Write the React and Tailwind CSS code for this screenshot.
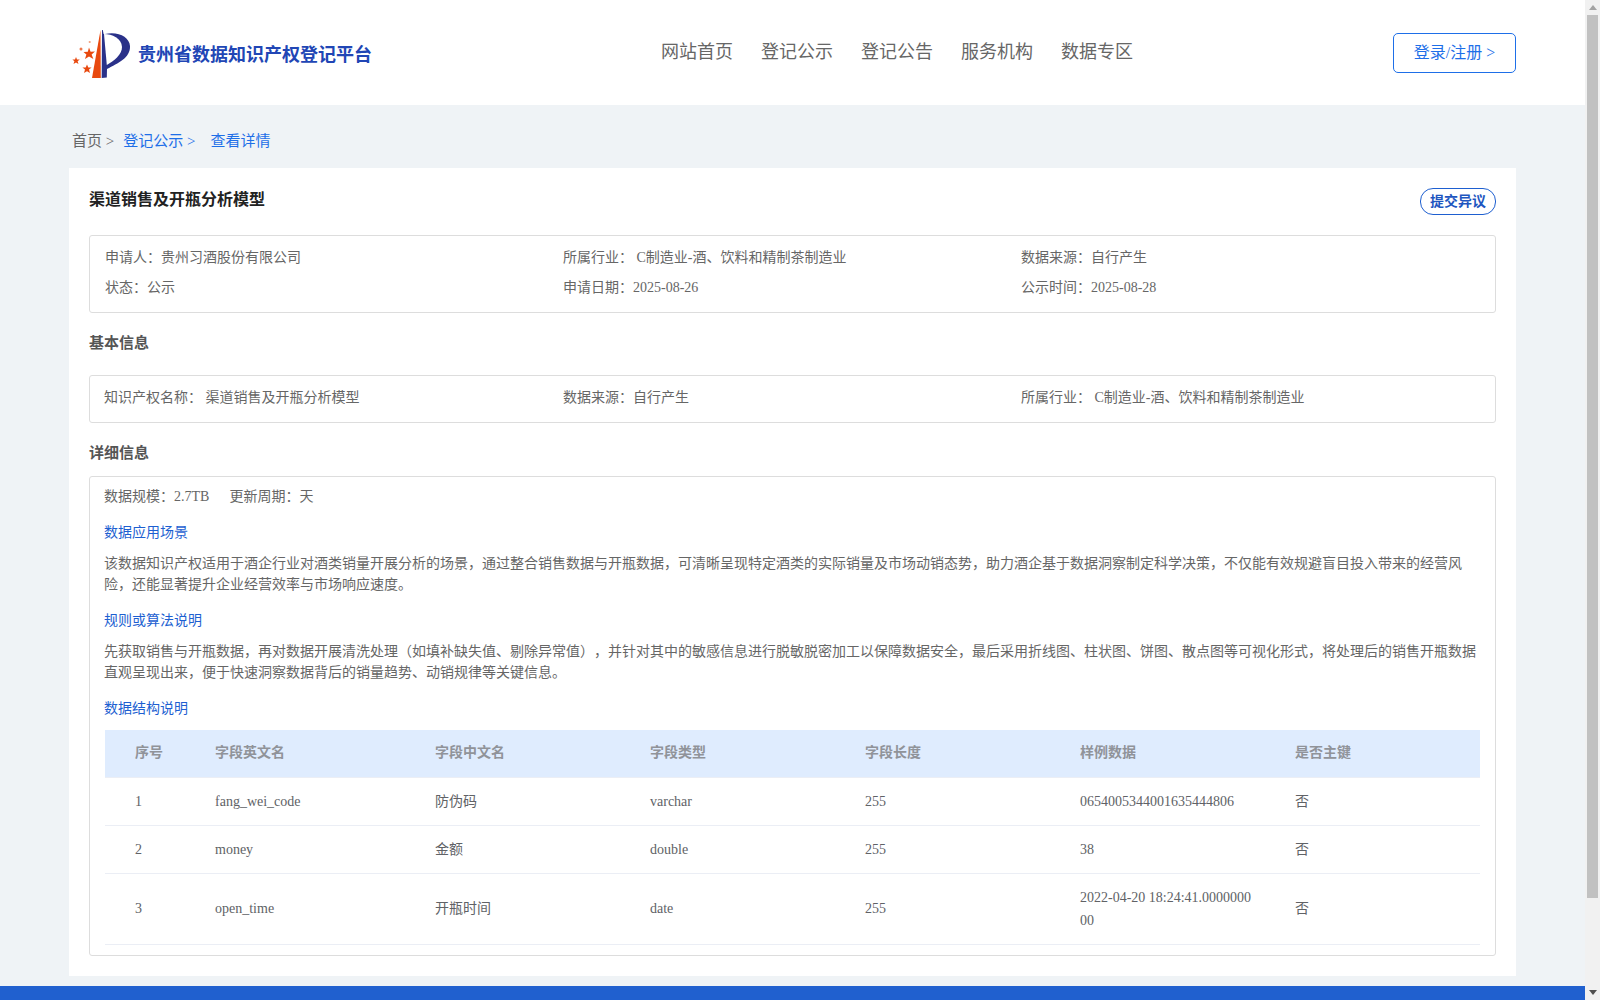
const rows = [
  ["1", "fang_wei_code", "防伪码", "varchar", "255", "0654005344001635444806", "否"],
  ["2", "money", "金额", "double", "255", "38", "否"],
  ["3", "open_time", "开瓶时间", "date", "255", "2022-04-20 18:24:41.000000000", "否"],
];
const heads = ["序号", "字段英文名", "字段中文名", "字段类型", "字段长度", "样例数据", "是否主键"];
const nav = ["网站首页", "登记公示", "登记公告", "服务机构", "数据专区"];

function Logo() {
  return (
    <svg viewBox="72 28 60 50" className="w-[60px] h-[50px] shrink-0">
      <path d="M100.5 29 L92 77 L100.8 77 Z" fill="#e8490f" />
      <path d="M102 29 L101.7 77 L106.8 76.5 L107 68 C118 62 130.5 57 130 45 C129.5 36 118 30 105 33 L103.6 33 L102.8 29 Z" fill="#2a3189" />
      <path d="M104 33 C112 33 121.5 37 122 46 C122.3 53 114 60 106.8 64 Z" fill="#ffffff" />
      <path d="M89 46.5 L90.6 50.8 L95 50.4 L91.6 53.6 L93.4 58 L89 55.6 L85 58 L86.4 53.4 L83.5 51 L87.8 50.8 Z" fill="#e8490f" />
      <path d="M76 56 L77 58.6 L79.8 58.5 L77.6 60.3 L78.5 63 L76 61.5 L73.5 63 L74.4 60.3 L72.4 58.5 L75 58.6 Z" fill="#e8490f" />
      <path d="M87 63.5 L88.3 66.4 L91.6 66.5 L89 68.6 L90 72 L87 70.2 L84 72 L85 68.6 L82.4 66.5 L85.7 66.4 Z" fill="#e8490f" />
      <circle cx="81" cy="48" r="1.5" fill="#ee7a50" />
      <circle cx="89.7" cy="41" r="1.1" fill="#f2a07e" />
    </svg>
  );
}

function Field({ children }) {
  return <div className="w-[458px] shrink-0 whitespace-nowrap">{children}</div>;
}

export default function App() {
  return (
    <div className="flex h-screen w-full overflow-hidden bg-[#eff3f6] text-sm text-[#666666] font-['Liberation_Serif','Noto_Sans_CJK_SC',serif] [text-spacing-trim:space-all]">
      <main className="w-[1585px] shrink-0">
        <header className="flex h-[105px] items-center bg-white pl-[72px]">
          <div className="flex w-[589px] items-center gap-[6px] pt-[2px]">
            <Logo />
            <span className="mt-[2px] text-lg font-bold text-[#2146b5]">贵州省数据知识产权登记平台</span>
          </div>
          <nav className="mb-[2px] flex gap-[28px] text-lg leading-[24px] text-[#666666]">
            {nav.map((n) => (
              <a key={n} className="block w-[72px]">{n}</a>
            ))}
          </nav>
          <button className="ml-[260px] h-[40px] w-[123px] rounded-[5px] border border-[#1e6fe8] text-base text-[#1e6fe8]">
            登录/注册 &gt;
          </button>
        </header>

        <div className="pl-[72px] pt-[25px] pb-[16px] text-[15px] leading-[22px]">
          <span>首页 &gt;</span>
          <span className="ml-[9px] text-[#1e6fe8]">登记公示 &gt;</span>
          <span className="ml-[15px] text-[#1e6fe8]">查看详情</span>
        </div>

        <section className="ml-[69px] w-[1447px] bg-white px-[20px] pt-[20px] pb-[20px]">
          <div className="flex h-[27px] items-start justify-between">
            <h1 className="text-base font-bold leading-[24px] text-[#222222]">渠道销售及开瓶分析模型</h1>
            <button className="h-[27px] w-[76px] rounded-[13px] border border-[#1e5fd0] text-sm font-bold leading-[25px] text-[#1e56c0]">
              提交异议
            </button>
          </div>

          <div className="mt-[20px] rounded-[3px] border border-[#dddddd] pl-[15px] pt-[7px] pb-[9px] leading-[30px]">
            <div className="flex">
              <Field>申请人：贵州习酒股份有限公司</Field>
              <Field>所属行业： C制造业-酒、饮料和精制茶制造业</Field>
              <Field>数据来源：自行产生</Field>
            </div>
            <div className="flex">
              <Field>状态：公示</Field>
              <Field>申请日期：2025-08-26</Field>
              <Field>公示时间：2025-08-28</Field>
            </div>
          </div>

          <h2 className="mt-[19px] text-[15px] font-bold leading-[22px] text-[#555555]">基本信息</h2>

          <div className="mt-[21px] flex rounded-[3px] border border-[#dddddd] pl-[14px] pt-[7px] pb-[9px] leading-[30px]">
            <div className="w-[459px] shrink-0 whitespace-nowrap">知识产权名称： 渠道销售及开瓶分析模型</div>
            <Field>数据来源：自行产生</Field>
            <Field>所属行业： C制造业-酒、饮料和精制茶制造业</Field>
          </div>

          <h2 className="mt-[19px] text-[15px] font-bold leading-[22px] text-[#555555]">详细信息</h2>

          <div className="mt-[12px] rounded-[3px] border border-[#dddddd] pl-[14px] pr-[15px] pt-[5px] pb-[10px]">
            <div className="leading-[30px]">
              数据规模：2.7TB<span className="ml-[20px]">更新周期：天</span>
            </div>

            <h3 className="mt-[11px] font-normal leading-[20px] text-[#1d5fd1]">数据应用场景</h3>
            <p className="mt-[10px] w-[1376px] leading-[21px]">
              该数据知识产权适用于酒企行业对酒类销量开展分析的场景，通过整合销售数据与开瓶数据，可清晰呈现特定酒类的实际销量及市场动销态势，助力酒企基于数据洞察制定科学决策，不仅能有效规避盲目投入带来的经营风险，还能显著提升企业经营效率与市场响应速度。
            </p>

            <h3 className="mt-[16px] font-normal leading-[20px] text-[#1d5fd1]">规则或算法说明</h3>
            <p className="mt-[10px] w-[1376px] leading-[21px]">
              先获取销售与开瓶数据，再对数据开展清洗处理（如填补缺失值、剔除异常值），并针对其中的敏感信息进行脱敏脱密加工以保障数据安全，最后采用折线图、柱状图、饼图、散点图等可视化形式，将处理后的销售开瓶数据直观呈现出来，便于快速洞察数据背后的销量趋势、动销规律等关键信息。
            </p>

            <h3 className="mt-[16px] font-normal leading-[20px] text-[#1d5fd1]">数据结构说明</h3>

            <table className="ml-[1px] mt-[11px] w-[1375px] table-fixed border-separate border-spacing-0 text-left">
              <colgroup>
                <col className="w-[100px]" />
                <col className="w-[220px]" />
                <col className="w-[215px]" />
                <col className="w-[215px]" />
                <col className="w-[215px]" />
                <col className="w-[215px]" />
                <col className="w-[195px]" />
              </colgroup>
              <thead>
                <tr className="bg-[#dfecfe]">
                  {heads.map((h, i) => (
                    <th
                      key={h}
                      className={`h-[48px] border-b border-[#ebeef5] pr-[10px] pb-[2px] font-bold text-[#909399] ${i === 0 ? "pl-[30px]" : "pl-[10px]"}`}
                    >
                      {h}
                    </th>
                  ))}
                </tr>
              </thead>
              <tbody>
                {rows.map((r, ri) => (
                  <tr key={r[0]}>
                    {r.map((c, i) => (
                      <td
                        key={i}
                        className={`border-b border-[#ebeef5] pt-[12px] leading-[23px] break-all text-[#606266] ${ri === 2 && i !== 5 ? "pb-[14px]" : "pb-[12px]"} ${i === 0 ? "pl-[30px]" : "pl-[10px]"} ${i === 5 ? "pr-[30px]" : "pr-[10px]"}`}
                      >
                        {c}
                      </td>
                    ))}
                  </tr>
                ))}
              </tbody>
            </table>
          </div>
        </section>

        <footer className="mt-[10px] h-[14px] bg-[#2060cf]" />
      </main>

      <aside className="flex h-full w-[15px] shrink-0 flex-col items-center bg-[#f1f1f1]">
        <div className="flex h-[15px] items-center justify-center">
          <svg viewBox="0 0 8 5" className="h-[5px] w-[8px]"><path d="M4 0 L8 5 L0 5 Z" fill="#a3a3a3" /></svg>
        </div>
        <div className="h-[883px] w-[11px] bg-[#c1c1c1]" />
        <div className="mt-auto flex h-[15px] items-center justify-center">
          <svg viewBox="0 0 8 5" className="h-[5px] w-[8px]"><path d="M0 0 L8 0 L4 5 Z" fill="#505050" /></svg>
        </div>
      </aside>
    </div>
  );
}
